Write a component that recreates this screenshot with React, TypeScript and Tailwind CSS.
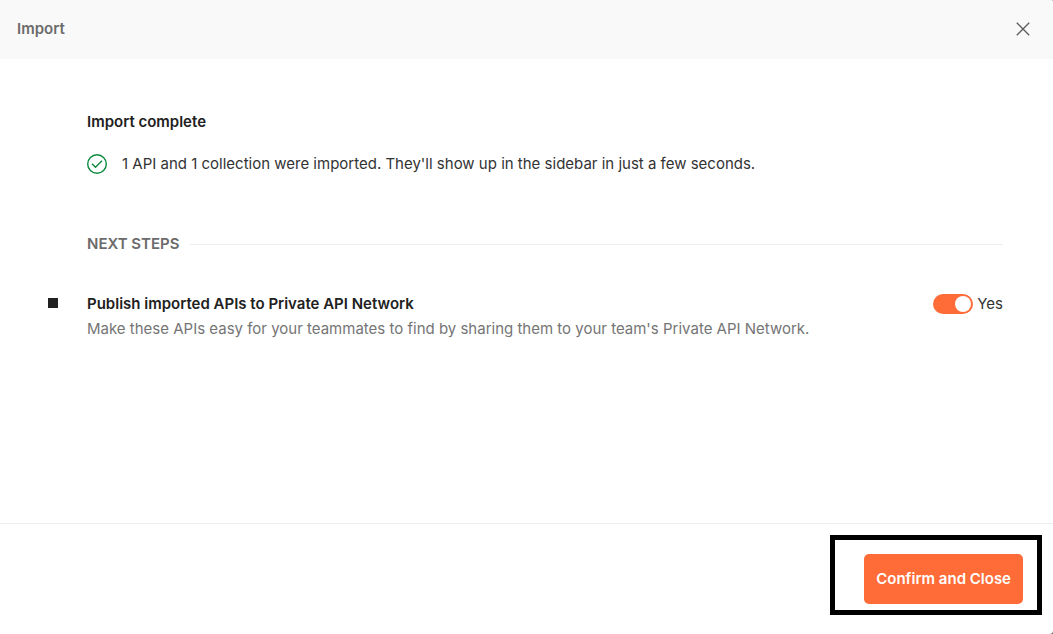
export default function App() {
  return (
    <div className="flex min-h-screen flex-col bg-[#808080] font-['Inter',sans-serif] text-[15px] leading-6 text-[#212121]">
      <section aria-label="Import" className="flex grow flex-col overflow-hidden rounded-tr-[2px] rounded-br-[4px] bg-white">
        <header className="flex h-[59px] items-center justify-between bg-[#f9f9f9] pr-[22px] pb-0.5 pl-[17px]">
          <h1 className="font-semibold text-[#6b6b6b]">Import</h1>
          <button type="button" aria-label="Close" className="text-[#5a5a5a]">
            <svg width="16" height="16" viewBox="0 0 16 16" fill="none" stroke="currentColor" strokeWidth="1.3">
              <path d="M1.8 1.8 L14.2 14.2 M14.2 1.8 L1.8 14.2" />
            </svg>
          </button>
        </header>

        <main className="grow pt-[51px] pr-[50px] pl-[87px]">
          <h2 className="font-semibold">Import complete</h2>
          <p className="mt-[18px] flex items-center gap-[15px] text-[#333333]">
            <svg className="shrink-0" width="20" height="20" viewBox="0 0 20 20" fill="none" stroke="#0b8a3e" strokeWidth="1.4">
              <circle cx="10" cy="10" r="9.3" />
              <path d="M5 9.7 L8.5 13.2 L15 6.7" />
            </svg>
            1 API and 1 collection were imported. They'll show up in the sidebar in just a few seconds.
          </p>

          <div className="mt-14 flex items-center gap-[10px]">
            <h3 className="font-semibold text-[#6b6b6b]">NEXT STEPS</h3>
            <div className="h-px grow bg-[#ededed]" />
          </div>

          <ul className="mt-9">
            <li className="-ml-[39px] flex items-start">
              <span className="mt-[6px] mr-[29px] size-[10px] shrink-0 bg-[#212121]" />
              <div className="grow">
                <h4 className="font-semibold">Publish imported APIs to Private API Network</h4>
                <p className="mt-px text-[#757575]">
                  Make these APIs easy for your teammates to find by sharing them to your team's Private API Network.
                </p>
              </div>
              <label className="flex items-center gap-1 text-[#333333]">
                <input
                  type="checkbox"
                  role="switch"
                  defaultChecked
                  className="flex h-5 w-10 appearance-none items-center rounded-full bg-[#b0b0b0] px-[2px] before:size-4 before:rounded-full before:bg-white checked:justify-end checked:bg-[#ff6c37]"
                />
                Yes
              </label>
            </li>
          </ul>
        </main>

        <footer className="flex justify-end border-t border-[#ededed] pt-[11px] pr-[11px] pb-[19px]">
          <div className="border-[5px] border-black pt-[14px] pr-[14px] pb-[6px] pl-[29px]">
            <button type="button" className="h-[50px] rounded-[5px] bg-[#ff6c37] px-3 font-semibold text-white">
              Confirm and Close
            </button>
          </div>
        </footer>
      </section>
    </div>
  );
}
